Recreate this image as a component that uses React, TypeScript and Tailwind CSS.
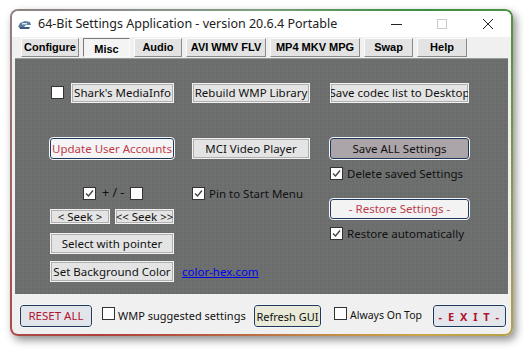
import React from "react";

const F = { fontFamily: '"Noto Sans", "Open Sans", sans-serif' };

function Check({ checked }: { checked?: boolean }) {
  return (
    <span className="inline-flex h-[13px] w-[13px] shrink-0 items-center justify-center border border-[#333] bg-white">
      {checked && (
        <svg width="11" height="11" viewBox="0 0 11 11">
          <polyline points="2,5.5 4.5,8 9,2.5" fill="none" stroke="#444" strokeWidth="1.4" />
        </svg>
      )}
    </span>
  );
}

function Btn({ children, className = "" }: { children: React.ReactNode; className?: string }) {
  return (
    <div
      className={
        "flex items-center justify-center border border-[#f2f2f2] bg-[#e4e4e4] text-[11.5px] leading-none text-[#111] shadow-[inset_0_0_0_1px_#b0b0b0] whitespace-nowrap overflow-hidden " +
        className
      }
    >
      {children}
    </div>
  );
}

function RBtn({ children, className = "" }: { children: React.ReactNode; className?: string }) {
  return (
    <div
      className={
        "flex items-center justify-center rounded-[3px] border border-[#1d3a5e] leading-none outline outline-1 outline-[#f6f6f6] whitespace-nowrap overflow-hidden " +
        className
      }
    >
      {children}
    </div>
  );
}

function Tab({ children, w, active }: { children: React.ReactNode; w: string; active?: boolean }) {
  return (
    <div
      className={
        "flex h-[19px] items-center justify-center text-[11px] font-bold " +
        w +
        (active
          ? " border-t border-l border-[#7a7a7a] border-r border-b border-r-[#fafafa] border-b-[#fafafa] bg-[#f4f4f4] pt-[3px]"
          : " border-t border-l border-[#fbfbfb] border-r border-b border-r-[#8a8a8a] border-b-[#8a8a8a] bg-[#e3e3e3]")
      }
      style={{ fontFamily: '"Liberation Sans", Arial, sans-serif' }}
    >
      {children}
    </div>
  );
}

export default function App() {
  return (
    <div className="h-[349px] w-[524px] bg-white pl-[10px] pt-[9px]" style={F}>
      <div className="h-[327px] w-[503px] rounded-[8px] bg-[conic-gradient(from_0deg,#7fa07f,#3a8f42_45deg,#c9a44a_135deg,#b0403c_225deg,#8c8c8c_315deg,#7fa07f)] p-[2px] shadow-[3px_4px_8px_rgba(0,0,0,0.45)]">
        <div className="flex h-full w-full flex-col overflow-hidden rounded-[6px] bg-[#f0f0f0]">
          {/* title bar */}
          <div className="flex h-[26px] shrink-0 items-center bg-white pl-[5px]">
            <svg width="15" height="12" viewBox="0 0 15 12" className="mr-[6px] mt-[1px]">
              <path d="M1 8 L3 4 L8 2 L13 3 L14 6 L9 6 L7 8 Z" fill="#5a7fa0" />
              <path d="M2 8 L13 8 L12 10 L3 10 Z" fill="#3b5b7a" />
              <rect x="5" y="4" width="5" height="1.5" fill="#d8e6f2" />
            </svg>
            <span className="text-[12.5px] text-[#222]">64-Bit Settings Application - version 20.6.4 Portable</span>
            <div className="ml-auto flex items-center">
              <div className="flex h-[26px] w-[46px] items-center justify-center">
                <div className="h-[1px] w-[11px] bg-[#222]" />
              </div>
              <div className="flex h-[26px] w-[46px] items-center justify-center">
                <div className="h-[10px] w-[10px] border border-[#c8c8c8]" />
              </div>
              <div className="flex h-[26px] w-[46px] items-center justify-center">
                <svg width="12" height="12" viewBox="0 0 12 12">
                  <path d="M1 1 L11 11 M11 1 L1 11" stroke="#222" strokeWidth="1" />
                </svg>
              </div>
            </div>
          </div>

          {/* tabs */}
          <div className="flex h-[20px] shrink-0 items-end gap-[4px] pl-[9px]">
            <Tab w="w-[58px]">Configure</Tab>
            <Tab w="w-[47px]" active>Misc</Tab>
            <Tab w="w-[48px]">Audio</Tab>
            <Tab w="w-[80px]">AVI WMV FLV</Tab>
            <Tab w="w-[90px]">MP4 MKV MPG</Tab>
            <Tab w="w-[49px]">Swap</Tab>
            <Tab w="w-[50px]">Help</Tab>
          </div>

          {/* panel */}
          <div className="mx-[3px] mt-[1px] h-[236px] shrink-0 border-t border-[#9a9a9a] bg-[#6e7070] bg-[radial-gradient(#646666_0.6px,transparent_0.8px)] bg-[length:4px_4px] pl-[35px]">
            <div className="flex gap-[18px]">
              {/* col1 */}
              <div className="flex w-[124px] flex-col">
                <div className="mt-[24px] flex h-[20px] items-center">
                  <span className="ml-[1px] mr-[7px]"><Check /></span>
                  <Btn className="h-[20px] w-[104px]">Shark's MediaInfo</Btn>
                </div>
                <RBtn className="mt-[35px] h-[21px] w-[124px] bg-[#f5f5f5] text-[11.5px] text-[#c23a4a]">Update User Accounts</RBtn>
                <div className="mt-[28px] flex h-[13px] items-center pl-[33px] text-[12.5px] text-[#111]">
                  <Check checked />
                  <span className="mx-[6px] leading-none">+ / -</span>
                  <Check />
                </div>
                <div className="mt-[9px] flex gap-[5px]">
                  <Btn className="h-[15px] w-[60px]">{"<  Seek  >"}</Btn>
                  <Btn className="h-[15px] w-[59px]">{"<< Seek >>"}</Btn>
                </div>
                <Btn className="mt-[9px] h-[21px] w-[124px]">Select with pointer</Btn>
                <div className="mt-[7px] flex items-center">
                  <Btn className="h-[21px] w-[124px] shrink-0">Set Background Color</Btn>
                  <span className="ml-[8px] whitespace-nowrap text-[11.5px] text-[#0000ee] underline">color-hex.com</span>
                </div>
              </div>
              {/* col2 */}
              <div className="flex w-[118px] flex-col">
                <Btn className="mt-[24px] h-[20px] w-[118px]">Rebuild WMP Library</Btn>
                <Btn className="mt-[35px] h-[21px] w-[118px]">MCI Video Player</Btn>
                <div className="mt-[28px] flex h-[13px] items-center gap-[4px] text-[11.5px] text-[#111]">
                  <Check checked />
                  <span className="whitespace-nowrap leading-none">Pin to Start Menu</span>
                </div>
              </div>
              {/* col3 */}
              <div className="ml-[2px] flex w-[139px] flex-col">
                <Btn className="mt-[24px] h-[20px] w-[139px]">Save codec list to Desktop</Btn>
                <RBtn className="mt-[35px] h-[21px] w-[139px] bg-[#aba4a8] text-[11.5px] text-[#111]">Save ALL Settings</RBtn>
                <div className="mt-[8px] flex h-[13px] items-center gap-[4px] text-[11.5px] text-[#111]">
                  <Check checked />
                  <span className="whitespace-nowrap leading-none">Delete saved Settings</span>
                </div>
                <RBtn className="mt-[19px] h-[20px] w-[139px] bg-[#f3f3f3] text-[11.5px] text-[#b9404e]">- Restore Settings -</RBtn>
                <div className="mt-[8px] flex h-[13px] items-center gap-[4px] text-[11.5px] text-[#111]">
                  <Check checked />
                  <span className="whitespace-nowrap leading-none">Restore automatically</span>
                </div>
              </div>
            </div>
          </div>

          {/* bottom bar */}
          <div className="mt-[11px] flex items-center pl-[8px] text-[11.5px] text-[#111]">
            <RBtn className="h-[22px] w-[72px] bg-[#e2e6ea] text-[11.5px] text-[#b3122e]">RESET ALL</RBtn>
            <span className="ml-[10px]"><Check /></span>
            <span className="ml-[3px] w-[130px] whitespace-nowrap text-[11px]">WMP suggested settings</span>
            <RBtn className="ml-[6px] h-[22px] w-[67px] bg-[#e9ead8] text-[11px] text-[#111]">Refresh GUI</RBtn>
            <span className="ml-[13px]"><Check /></span>
            <span className="ml-[3px] w-[76px] whitespace-nowrap text-[10.5px]">Always On Top</span>
            <RBtn className="ml-[7px] h-[22px] w-[73px] bg-[#e3e6ea] text-[11px] font-bold tracking-[1.5px] text-[#b3122e]">- E X I T -</RBtn>
          </div>
        </div>
      </div>
    </div>
  );
}
